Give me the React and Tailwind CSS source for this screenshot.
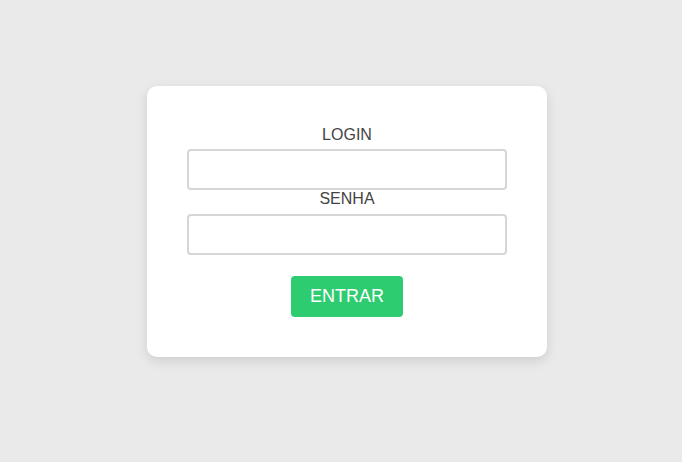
export default function App() {
  return (
    <div
      className="min-h-screen w-full bg-[#eaeaea] pl-[147px] pt-[86px]"
      style={{ fontFamily: '"Liberation Sans", Arial, sans-serif' }}
    >
      <form
        className="w-[400px] rounded-[10px] bg-white px-[40px] pt-[40px] pb-[40px] shadow-[0_4px_12px_rgba(0,0,0,0.12)] flex flex-col items-center"
        onSubmit={(e) => e.preventDefault()}
      >
        <label className="block w-full text-center text-[16px] leading-[18px] text-[#444]">
          LOGIN
        </label>
        <input
          type="text"
          className="mt-[5px] block h-[41px] w-[320px] rounded-[4px] border-2 border-[#d6d6d6] bg-white px-2 outline-none"
        />
        <label className="block w-full text-center text-[16px] leading-[18px] text-[#444]">
          SENHA
        </label>
        <input
          type="password"
          className="mt-[6px] block h-[41px] w-[320px] rounded-[4px] border-2 border-[#d6d6d6] bg-white px-2 outline-none"
        />
        <button
          type="submit"
          className="mt-[21px] h-[41px] w-[112px] rounded-[4px] bg-[#2ecc71] text-[18px] text-white"
        >
          ENTRAR
        </button>
      </form>
    </div>
  )
}
